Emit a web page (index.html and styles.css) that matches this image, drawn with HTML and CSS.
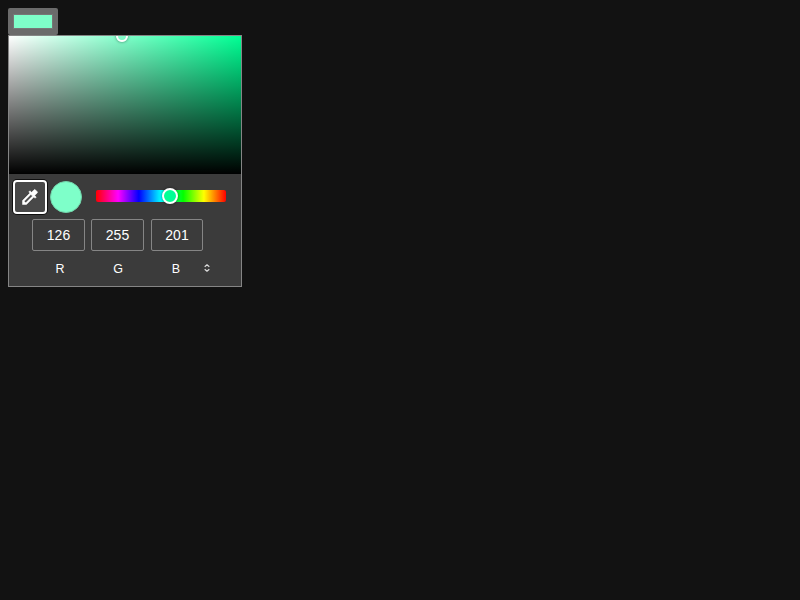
FILE: index.html
```
<!DOCTYPE html>
<html lang="en">
<head>
<meta charset="utf-8">
<title>Color picker</title>
<link rel="stylesheet" href="styles.css">
</head>
<body>
<div class="swatch-button"><div class="swatch"></div></div>
<div class="picker">
  <div class="well"><div class="well-ring"></div></div>
  <div class="controls">
    <div class="dropper">
      <svg width="20" height="20" viewBox="0 0 24 24"><path fill="#fff" stroke="#fff" stroke-width=".6" d="M20.71 5.63l-2.34-2.34a1 1 0 0 0-1.41 0l-3.12 3.12-1.93-1.91-1.41 1.41 1.42 1.42L3 16.25V21h4.75l8.92-8.92 1.42 1.42 1.41-1.41-1.92-1.92 3.12-3.12c.4-.4.4-1.03.01-1.42zM6.92 19L5 17.08l8.06-8.06 1.92 1.92L6.92 19z"/></svg>
    </div>
    <div class="current"></div>
    <div class="hue"><div class="hue-thumb"></div></div>
  </div>
  <div class="values">
    <div class="value">126</div>
    <div class="value">255</div>
    <div class="value">201</div>
  </div>
  <div class="labels">
    <span>R</span><span>G</span><span>B</span>
    <svg class="toggle" width="6" height="8" viewBox="0 0 6 8"><path d="M.7 2.8L3 .8l2.3 2M.7 5.2L3 7.2l2.3-2" fill="none" stroke="#ddd" stroke-width="1.2"/></svg>
  </div>
</div>
</body>
</html>
```
FILE: styles.css
```
* { box-sizing: border-box; }
body {
  margin: 8px;
  background: #121212;
  color: #fff;
  font-family: "Liberation Sans", Arial, sans-serif;
}
.swatch-button {
  width: 50px;
  height: 27px;
  padding: 6px 5px;
  background: #6b6b6b;
  border-radius: 2px;
}
.swatch {
  height: 15px;
  background: #7effc9;
  border: 1px solid #777;
}
.picker {
  width: 234px;
  height: 252px;
  background: #3b3b3b;
  border: 1px solid #858585;
}
.well {
  position: relative;
  height: 138px;
  overflow: hidden;
  background:
    linear-gradient(to top, #000, transparent),
    linear-gradient(to right, #fff, rgba(255, 255, 255, 0)),
    #00ff94;
}
.well-ring {
  position: absolute;
  left: 107px;
  top: -6px;
  width: 12px;
  height: 12px;
  border: 2px solid #fff;
  border-radius: 50%;
  box-shadow: 0 0 3px rgba(0, 0, 0, 0.5);
}
.controls {
  display: flex;
  align-items: flex-start;
  height: 45px;
  padding: 6px 0 0 4px;
}
.dropper {
  display: flex;
  align-items: center;
  justify-content: center;
  width: 34px;
  height: 34px;
  background: #484848;
  border: 2px solid #fff;
  border-radius: 4px;
  box-shadow: 0 0 0 1px #101010;
}
.current {
  width: 32px;
  height: 32px;
  margin: 1px 14px 0 3px;
  background: #7effc9;
  border: 1px solid #72d3aa;
  border-radius: 50%;
}
.hue {
  position: relative;
  width: 130px;
  height: 12px;
  margin-top: 10px;
  border-radius: 2px;
  background: linear-gradient(to left, #f00, #ff0 17%, #0f0 33%, #0ff 50%, #00f 67%, #f0f 83%, #f00);
}
.hue-thumb {
  position: absolute;
  left: 66px;
  top: -2px;
  width: 16px;
  height: 16px;
  background: #00ff94;
  border: 2px solid #fff;
  border-radius: 50%;
  box-shadow: 0 0 3px rgba(0, 0, 0, 0.5);
}
.values {
  display: flex;
  gap: 6px;
  padding-left: 23px;
}
.value {
  width: 53px;
  height: 32px;
  line-height: 31px;
  font-size: 14px;
  text-align: center;
  border: 1px solid #858585;
  border-radius: 2px;
}
.value:last-child {
  width: 52px;
  margin-left: 1px;
}
.labels {
  display: grid;
  grid-template-columns: 58px 58px 58px 6px;
  align-items: center;
  height: 34px;
  padding-left: 22px;
  font-size: 12.5px;
  text-align: center;
}
.labels span { padding-top: 1px; }
.toggle { margin-left: -1px; }
```
